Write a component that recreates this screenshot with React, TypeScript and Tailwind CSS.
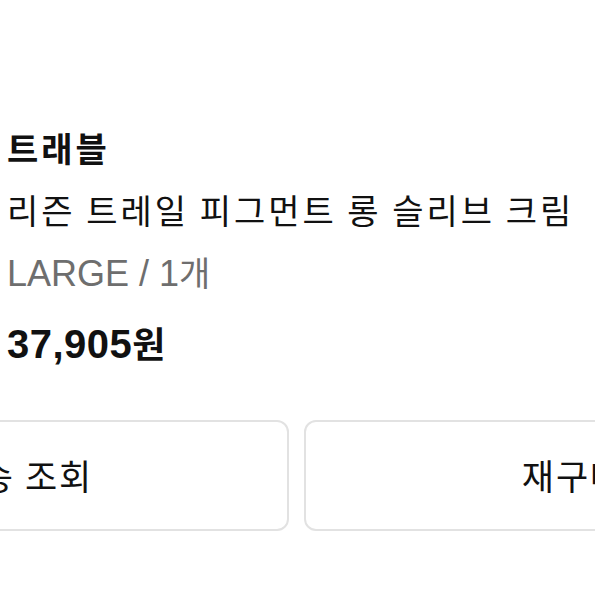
const ko = { fontFamily: "'Noto Sans CJK KR', 'Liberation Sans', sans-serif" };

const OrderItem = () => {
  return (
    <div className="w-[595px] h-[595px] overflow-hidden bg-white text-[#111]">
      <div className="pt-[117px] pl-[7px]" style={ko}>
        <div className="h-[62px] leading-[62px] text-[34px] tracking-[3px] font-bold">트래블</div>
        <div className="h-[62px] leading-[62px] text-[34px] tracking-[3px] whitespace-nowrap">
          리즌 트레일 피그먼트 롱 슬리브 크림
        </div>
        <div className="h-[62px] leading-[62px] text-[34px] text-[#6e6e6e] whitespace-nowrap">
          <span className="font-['Liberation_Sans'] text-[36px]">LARGE / 1</span>개
        </div>
        <div className="mt-[8px] h-[62px] leading-[62px] text-[36px] font-bold whitespace-nowrap">
          <span className="font-['Liberation_Sans'] text-[40px] tracking-[0.5px]">37,905</span>원
        </div>
      </div>
      <div className="mt-[47px] ml-[-249px] flex gap-[15px] w-[1091px]" style={ko}>
        <button className="w-[538px] h-[111px] shrink-0 rounded-[12px] border-2 border-[#e2e2e2] bg-white text-[35px] tracking-[2px] text-[#111]">
          배송 조회
        </button>
        <button className="w-[538px] h-[111px] shrink-0 rounded-[12px] border-2 border-[#e2e2e2] bg-white text-[35px] tracking-[2px] text-[#111]">
          재구매
        </button>
      </div>
    </div>
  );
};

export default function App() {
  return <OrderItem />;
}
